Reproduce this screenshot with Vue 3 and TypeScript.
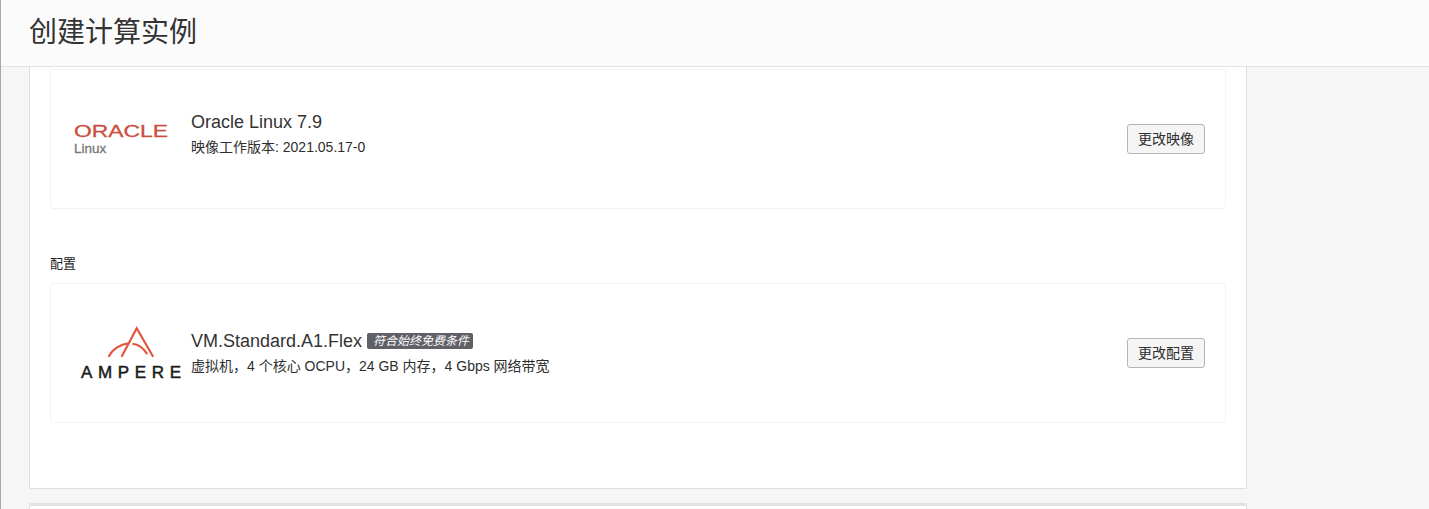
<script setup lang="ts">
interface Row {
  title: string;
  sub: string;
  action: string;
  label?: string;
  badge?: string;
  logo: "oracle" | "ampere";
}

const rows: Row[] = [
  {
    title: "Oracle Linux 7.9",
    sub: "映像工作版本: 2021.05.17-0",
    action: "更改映像",
    logo: "oracle",
  },
  {
    label: "配置",
    title: "VM.Standard.A1.Flex",
    badge: "符合始终免费条件",
    sub: "虚拟机，4 个核心 OCPU，24 GB 内存，4 Gbps 网络带宽",
    action: "更改配置",
    logo: "ampere",
  },
];
</script>

<template>
  <div class="page">
    <header class="page-head">
      <h1>创建计算实例</h1>
    </header>
    <main class="content">
      <section class="panel">
        <div v-for="row in rows" :key="row.title" class="group">
          <div v-if="row.label" class="group-label">{{ row.label }}</div>
          <div class="card">
            <div class="logo">
              <svg v-if="row.logo === 'oracle'" width="110" height="50" viewBox="0 0 110 50">
                <text
                  x="3"
                  y="23"
                  class="oracle-word"
                  textLength="94"
                  lengthAdjust="spacingAndGlyphs"
                >ORACLE</text>
                <text x="3" y="38.500" class="oracle-sub">Linux</text>
              </svg>
              <svg v-else width="110" height="60" viewBox="0 0 110 60">
                <g fill="none" stroke="#e2553f" stroke-width="2.200" stroke-linecap="round">
                  <path d="M51 33 L65.700 5.300 L81.700 33" />
                  <path d="M38 33 C41 27 49 21 57.300 20.300" />
                  <path d="M62.300 21 C68 21.500 72 25 75.700 30.300" />
                </g>
                <text
                  x="10"
                  y="55.300"
                  class="ampere-word"
                  textLength="100"
                  lengthAdjust="spacing"
                >AMPERE</text>
              </svg>
            </div>
            <div class="info" :class="{ 'info-image': row.logo === 'oracle' }">
              <div class="title">
                <span>{{ row.title }}</span>
                <span v-if="row.badge" class="badge">{{ row.badge }}</span>
              </div>
              <div class="sub">{{ row.sub }}</div>
            </div>
            <button class="action" type="button">{{ row.action }}</button>
          </div>
        </div>
      </section>
      <div class="next-panel"></div>
    </main>
  </div>
</template>

<style scoped>
.page {
  height: 509px;
  overflow: hidden;
  box-sizing: border-box;
  border-left: 1px solid #a9a9a9;
  background: #f6f6f6;
  color: #2a2a2a;
  font-family: "Liberation Sans", "Noto Sans CJK SC", sans-serif;
}

.page-head {
  height: 67px;
  box-sizing: border-box;
  padding: 10px 28px 0;
  background: #fbfbfb;
  border-bottom: 1px solid #e3e3e3;
}

.page-head h1 {
  margin: 0;
  font-size: 28px;
  line-height: 40px;
  font-weight: 400;
  font-family: "Noto Sans CJK SC", sans-serif;
  color: #333;
}

.content {
  width: 1218px;
  margin-left: 28px;
}

.panel {
  box-sizing: border-box;
  height: 422px;
  padding: 2px 20px 0;
  background: #fff;
  border: 1px solid #dfdfdf;
  border-top: none;
  border-radius: 0 0 2px 2px;
}

.group-label {
  margin-top: 45px;
  font-size: 13px;
  line-height: 20px;
  margin-bottom: 9px;
  color: #222;
}

.card {
  display: flex;
  align-items: center;
  height: 140px;
  box-sizing: border-box;
  border: 1px solid #f3f3f3;
  border-radius: 3px;
  padding: 0 20px 0 20px;
}

.logo {
  width: 120px;
  flex: none;
  display: flex;
  align-items: center;
}

.oracle-word {
  font-size: 17px;
  font-family: "Liberation Sans", sans-serif;
  fill: #cb4f3e;
  stroke: #cb4f3e;
  stroke-width: 0.3px;
}

.oracle-sub {
  font-size: 13.5px;
  font-family: "Liberation Sans", sans-serif;
  fill: #77787a;
  stroke: #77787a;
  stroke-width: 0.3px;
}

.ampere-word {
  font-size: 17px;
  font-family: "Liberation Sans", sans-serif;
  fill: #1c1c1c;
  stroke: #1c1c1c;
  stroke-width: 0.5px;
}

.info {
  flex: 1;
  min-width: 0;
  margin-top: -1px;
}

.info-image {
  margin-top: -12px;
}

.title {
  display: flex;
  align-items: center;
  gap: 5px;
  font-size: 18px;
  line-height: 24px;
  color: #333;
}

.badge {
  font-size: 12px;
  line-height: 16px;
  height: 16px;
  padding: 0 4px 0 6px;
  background: #5f6166;
  color: #fff;
  font-style: italic;
  border-radius: 2px;
}

.sub {
  margin-top: 3px;
  font-size: 14px;
  line-height: 20px;
  color: #2e2e2e;
}

.action {
  width: 78px;
  height: 30px;
  padding: 0 0 2px;
  font: inherit;
  font-size: 14px;
  color: #2e2e2e;
  background: #f5f5f5;
  border: 1px solid #b5b5b5;
  border-radius: 3px;
}

.next-panel {
  height: 40px;
  margin-top: 14px;
  background: #fff;
  border: 1px solid #dfdfdf;
  border-top: 3px solid #e2e2e2;
  border-radius: 2px 2px 0 0;
}
</style>

<style>
html,
body {
  margin: 0;
  overflow: hidden;
}
</style>
